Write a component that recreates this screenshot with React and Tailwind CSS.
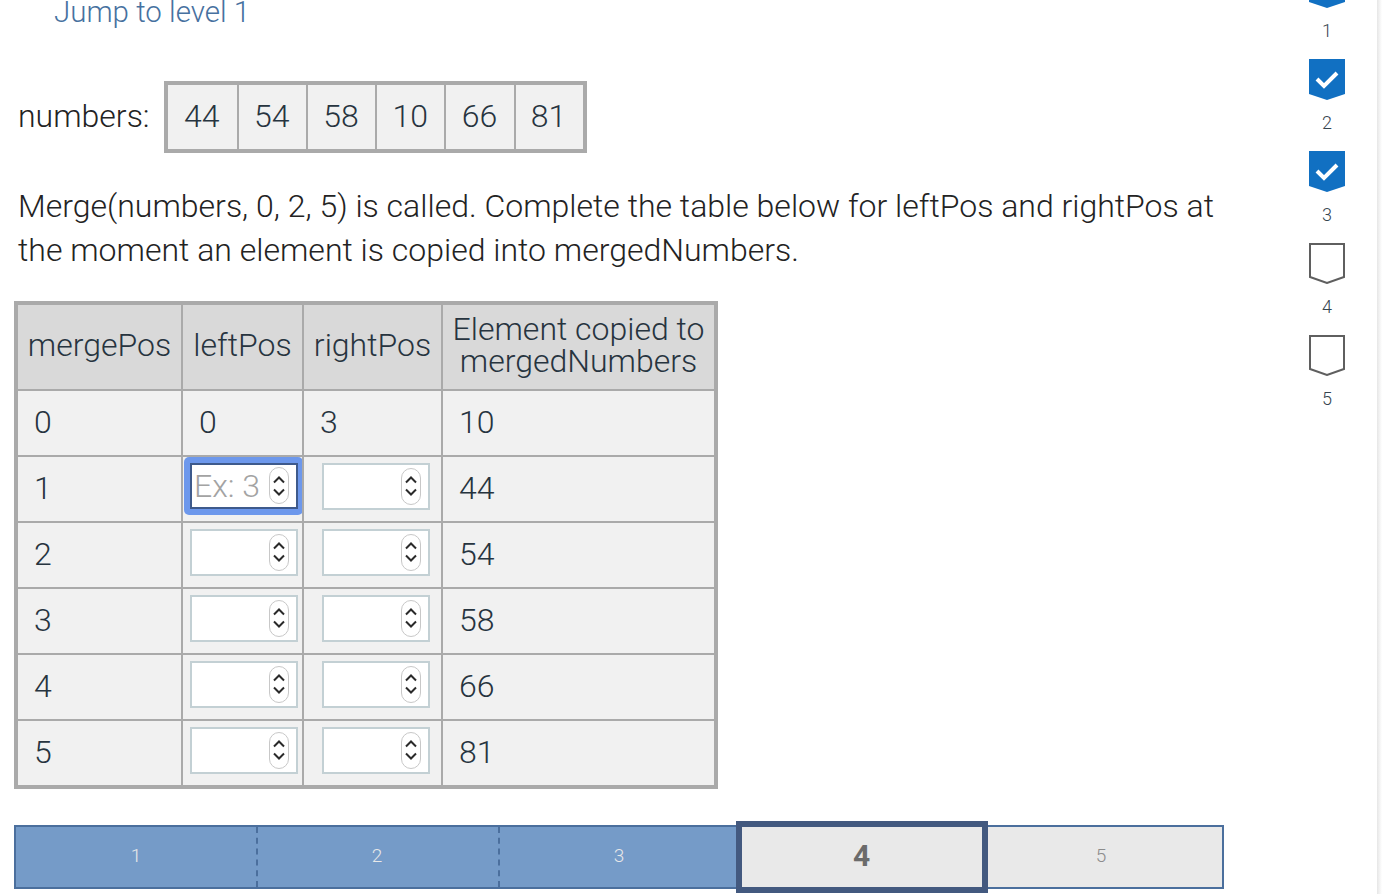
import React from 'react';

const numbers = [44, 54, 58, 10, 66, 81];
const rows = [
  { merge: 0, left: 0, right: 3, copied: 10 },
  { merge: 1, copied: 44, focused: true },
  { merge: 2, copied: 54 },
  { merge: 3, copied: 58 },
  { merge: 4, copied: 66 },
  { merge: 5, copied: 81 },
];

function Spinner() {
  return (
    <span className="flex h-[37px] w-[20px] flex-col items-center justify-center gap-[4px] rounded-full border border-[#c8c8c8] bg-white">
      <svg width="14" height="9" viewBox="0 0 14 9" fill="none" stroke="#2a2a2a" strokeWidth="2">
        <path d="M2 7.5 7 2.5l5 5" />
      </svg>
      <svg width="14" height="9" viewBox="0 0 14 9" fill="none" stroke="#2a2a2a" strokeWidth="2">
        <path d="M2 1.5 7 6.5l5-5" />
      </svg>
    </span>
  );
}

function NumberInput({ focused, placeholder }) {
  if (focused) {
    return (
      <div className="-mx-[6px] -mt-[6px] mb-[1px] w-[119px] rounded-[5px] bg-[#6d98ec] p-[6px] pr-[5px]">
        <div className="flex h-[46px] w-[108px] items-center justify-between border-[2px] border-[#3e5a8c] bg-white pl-[2px] pr-[7px] text-[32px] text-[#a3a3a3]">
          <span>{placeholder}</span>
          <Spinner />
        </div>
      </div>
    );
  }
  return (
    <div className="mb-[6px] flex h-[47px] w-[108px] items-center justify-end border-[2px] border-[#c3d0d4] bg-white pr-[7px]">
      <Spinner />
    </div>
  );
}

function Marker({ num, done }) {
  return (
    <div className="flex h-[92px] flex-col items-center">
      <svg width="36" height="41" viewBox="0 0 36 41">
        <path
          d={done ? 'M0 0h36v35l-18 6-18-6z' : 'M1 1h34v33l-17 6-17-6z'}
          fill={done ? '#1170c2' : '#fff'}
          stroke={done ? 'none' : '#5f5f5f'}
          strokeWidth="2"
        />
        {done && <path d="M8 20l7 7 13-13" fill="none" stroke="#fff" strokeWidth="4" />}
      </svg>
      <span className="mt-[11px] text-[18px] leading-[24px] text-[#36444f]">{num}</span>
    </div>
  );
}

function App() {
  const thCls = 'border-[2px] border-[#aaaaaa] bg-[#d9d9d9] pb-[4px] text-center font-light';
  const tdCls = 'border-[2px] border-[#aaaaaa] bg-[#f1f1f1] font-light';

  return (
    <div className="flex h-[894px] w-[1390px] overflow-hidden bg-white font-['Roboto',sans-serif] font-light text-[#27343f]">
      <main className="w-[1290px] shrink-0 pl-[14px]">
        <div className="-mt-[6px] pl-[40px] text-[29.5px] leading-[36px] text-[#47719f]">Jump to level 1</div>

        <div className="mt-[51px] flex items-center">
          <span className="ml-[4px] mr-[14px] pb-[2px] text-[32px] text-[#232323]">numbers:</span>
          <div className="flex h-[72px] border-[4px] border-[#aaaaaa]">
            {numbers.map((n, i) => (
              <div
                key={i}
                className="flex w-[69.2px] items-center justify-center border-l-[2px] border-[#aaaaaa] bg-[#f1f1f1] pb-[2px] pr-[1px] text-[32px] first:border-l-0"
              >
                {n}
              </div>
            ))}
          </div>
        </div>

        <p className="mt-[31px] ml-[4px] w-[1210px] text-[32px] leading-[44px] text-[#232323]">
          Merge(numbers, 0, 2, 5) is called. Complete the table below for leftPos and rightPos at the moment an element
          is copied into mergedNumbers.
        </p>

        <table className="mt-[29px] w-[704px] table-fixed border-collapse border-[4px] border-[#aaaaaa] text-[32px]">
          <colgroup>
            <col className="w-[166px]" />
            <col className="w-[121px]" />
            <col className="w-[139px]" />
            <col />
          </colgroup>
          <thead>
            <tr className="h-[87px]">
              <th className={thCls}>mergePos</th>
              <th className={thCls}>leftPos</th>
              <th className={thCls}>rightPos</th>
              <th className={`${thCls} leading-[32px]`}>
                Element copied to
                <br />
                mergedNumbers
              </th>
            </tr>
          </thead>
          <tbody>
            {rows.map(r => (
              <tr key={r.merge} className="h-[66px] last:h-[67px]">
                <td className={`${tdCls} pb-[2px] pl-[16px]`}>{r.merge}</td>
                {r.left !== undefined ? (
                  <>
                    <td className={`${tdCls} pb-[2px] pl-[16px]`}>{r.left}</td>
                    <td className={`${tdCls} pb-[2px] pl-[16px]`}>{r.right}</td>
                  </>
                ) : (
                  <>
                    <td className={`${tdCls} pl-[7px]`}>
                      <NumberInput focused={r.focused} placeholder="Ex: 3" />
                    </td>
                    <td className={`${tdCls} pl-[18px]`}>
                      <NumberInput />
                    </td>
                  </>
                )}
                <td className={`${tdCls} pb-[2px] pl-[16px]`}>{r.copied}</td>
              </tr>
            ))}
          </tbody>
        </table>

        <div className="mt-[36px] flex h-[64px] w-[1210px] border-[2px] border-[#4b6f9d] text-[19px]">
          <div className="flex w-[240px] items-center justify-center bg-[#759bc8] pb-[2px] text-[#e8e8e8]">1</div>
          <div className="flex w-[242px] items-center justify-center border-l-[2px] border-dashed border-[#4b6f9d] bg-[#759bc8] pb-[2px] pr-[2px] text-[#e8e8e8]">2</div>
          <div className="flex w-[244px] items-center justify-center border-l-[2px] border-dashed border-[#4b6f9d] bg-[#759bc8] pb-[2px] pr-[4px] text-[#e8e8e8]">3</div>
          <div className="relative z-10 flex w-[240px] items-center justify-center bg-[#e9e9e9] pb-[3px] pr-[1px] text-[30px] font-bold text-[#6b6b6b] outline-[6px] outline-[#43597f]">
            4
          </div>
          <div className="flex flex-1 items-center justify-center bg-[#e9e9e9] pb-[2px] pr-[2px] text-[#8c8c8c]">5</div>
        </div>
      </main>

      <aside className="-mt-[33px] ml-[19px] flex w-[36px] shrink-0 flex-col">
        {[1, 2, 3].map(n => <Marker key={n} num={n} done />)}
        {[4, 5].map(n => <Marker key={n} num={n} />)}
      </aside>
      <div className="ml-[32px] h-full w-[5px] bg-gradient-to-r from-[#e6e6e6] to-white" />
    </div>
  );
}

export default App;
